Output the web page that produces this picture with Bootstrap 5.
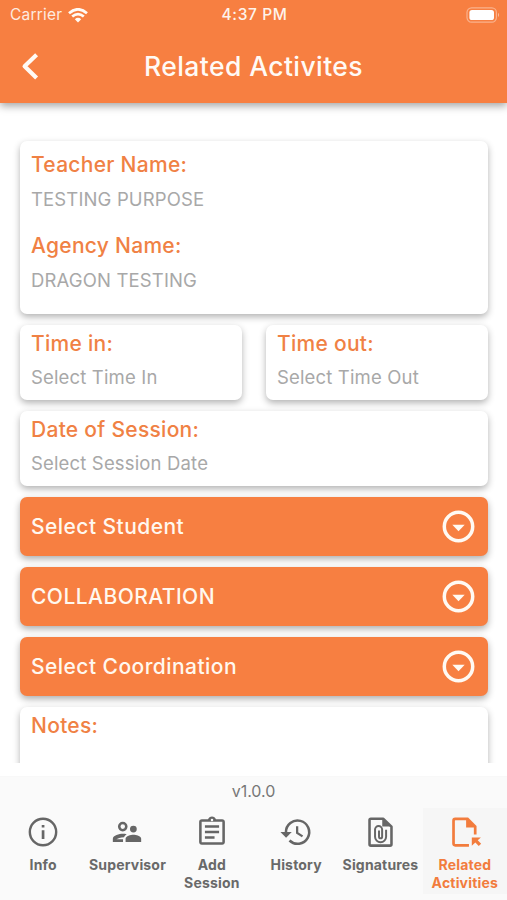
<!DOCTYPE html>
<html lang="en">
<head>
<meta charset="utf-8">
<meta name="viewport" content="width=device-width, initial-scale=1">
<title>Related Activites</title>
<link href="https://cdn.jsdelivr.net/npm/bootstrap@5.3.0/dist/css/bootstrap.min.css" rel="stylesheet">
<style>
:root{--brand:#f77f41}
body{font-family:Inter,"Liberation Sans",sans-serif;background:#fff}
.app{height:900px;overflow:hidden}
.top{height:103px;background:var(--brand);color:#fffaf5;box-shadow:0 3px 8px rgba(0,0,0,.36);z-index:2}
.status{height:30px;padding:0 8px 0 10px}
.status>div{flex:1 1 0}
.carrier{font-size:15.5px;letter-spacing:.2px;opacity:.88}
.wifi{margin-left:6px}
.clock{font-size:15.5px;font-weight:500;letter-spacing:.6px;opacity:.95}
.titlebar{height:73px;padding-left:21px}
.titlebar h1{font-size:26.5px;font-weight:500;letter-spacing:.42px;line-height:40px;margin:-2px -5px 0 0}
.side{width:20px}
.content{height:660px;padding:38px 19px 0 20px;overflow:hidden}
.panel{background:#fff;border-radius:7px;box-shadow:0 3px 7px rgba(0,0,0,.3);padding:5px 11px 0}
.panel.tall{height:173px;padding-top:10px}
.panel.mid{height:75px}
.panel.notes{height:120px}
.stack{gap:11px}
.lbl{font-size:21px;font-weight:500;color:#f08144;line-height:28px;letter-spacing:.28px;white-space:nowrap}
.val{font-size:18.5px;font-weight:400;color:#a8a8a8;line-height:26px;margin-top:7px;letter-spacing:.16px;white-space:nowrap}
.panel.mid .val{margin-top:6px}
.val.caps{letter-spacing:.14px}
.gap-field{margin-top:20px}
.pick{height:59px;border-radius:7px;border:0;background:var(--brand);color:#fff8ef;font-size:21px;font-weight:500;letter-spacing:.45px;padding:0 13px 0 11px;box-shadow:0 3px 7px rgba(0,0,0,.32)}
.foot{height:124px;background:#fafafa;color:#666;border-top:1px solid #f8f8f8}
.ver{font-size:16px;line-height:20px;padding-top:4px;letter-spacing:0;color:#777}
.tabs{margin:7px 0 0 1px}
.tab{flex:1 1 0;height:86px;padding-top:7px;font-size:14px;line-height:17.5px;font-weight:700;letter-spacing:.18px;color:#696969;text-decoration:none;white-space:nowrap}
.tab svg{display:block;margin-bottom:7px}
.tab.on{background:#f6f6f6;color:#f27c3d}
</style>
<script src="https://cdn.jsdelivr.net/npm/bootstrap@5.3.0/dist/js/bootstrap.bundle.min.js"></script>
</head>
<body>
<div class="app d-flex flex-column">
  <header class="top position-relative flex-shrink-0">
    <div class="status d-flex align-items-center">
      <div class="d-flex align-items-center"><span class="carrier">Carrier</span>
        <svg class="wifi" width="20" height="15" viewBox="0 0 20 15" fill="none" stroke="#fffaf5" stroke-width="2.7"><path d="M1 5.2Q10-2.6 19 5.2M4.2 8.6Q10 3.6 15.8 8.6"/><path d="M6.8 11.2Q10 8.4 13.2 11.2L10 14.6Z" fill="#fffaf5" stroke="none"/></svg>
      </div>
      <span class="clock">4:37 PM</span>
      <div class="d-flex justify-content-end">
        <svg width="33" height="16" viewBox="0 0 33 16"><rect x="1" y=".8" width="29.4" height="14.4" rx="4.6" fill="none" stroke="#fff" stroke-opacity=".4" stroke-width="1.2"/><rect x="3.4" y="3" width="24.6" height="10" rx="2.6" fill="#fff"/><path d="M32 5.8q2 2.2 0 4.4z" fill="#fff" fill-opacity=".5"/></svg>
      </div>
    </div>
    <div class="titlebar d-flex align-items-center justify-content-between pe-4">
      <svg width="18" height="28" viewBox="0 0 18 28" fill="none" stroke="#fffaf5" stroke-width="4.2"><path d="M15.6 1.8 3.6 13.2 15.6 25" stroke-linejoin="round"/></svg>
      <h1>Related Activites</h1>
      <span class="side"></span>
    </div>
  </header>

  <main class="content flex-shrink-0">
    <div class="stack d-flex flex-column">
      <section class="panel tall">
        <div class="lbl">Teacher Name:</div><div class="val caps">TESTING PURPOSE</div>
        <div class="lbl gap-field">Agency Name:</div><div class="val caps">DRAGON TESTING</div>
      </section>
      <div class="d-flex gap-4">
        <section class="panel mid flex-fill w-50"><div class="lbl">Time in:</div><div class="val">Select Time In</div></section>
        <section class="panel mid flex-fill w-50"><div class="lbl">Time out:</div><div class="val">Select Time Out</div></section>
      </div>
      <section class="panel mid"><div class="lbl">Date of Session:</div><div class="val">Select Session Date</div></section>
      <button class="pick d-flex align-items-center justify-content-between"><span>Select Student</span>
        <svg width="33" height="33" viewBox="0 0 33 33"><circle cx="16.5" cy="16.5" r="14.2" fill="none" stroke="#fffaf3" stroke-width="3.5"/><path d="M10.3 14.8h12.4l-6.2 6.4z" fill="#fffaf3"/></svg></button>
      <button class="pick d-flex align-items-center justify-content-between"><span>COLLABORATION</span>
        <svg width="33" height="33" viewBox="0 0 33 33"><circle cx="16.5" cy="16.5" r="14.2" fill="none" stroke="#fffaf3" stroke-width="3.5"/><path d="M10.3 14.8h12.4l-6.2 6.4z" fill="#fffaf3"/></svg></button>
      <button class="pick d-flex align-items-center justify-content-between"><span>Select Coordination</span>
        <svg width="33" height="33" viewBox="0 0 33 33"><circle cx="16.5" cy="16.5" r="14.2" fill="none" stroke="#fffaf3" stroke-width="3.5"/><path d="M10.3 14.8h12.4l-6.2 6.4z" fill="#fffaf3"/></svg></button>
      <section class="panel notes"><div class="lbl">Notes:</div></section>
    </div>
  </main>

  <footer class="foot mt-auto flex-shrink-0">
    <div class="ver text-center">v1.0.0</div>
    <nav class="tabs d-flex text-center">
      <a class="tab d-flex flex-column align-items-center" href="#"><svg width="34" height="34" viewBox="0 0 24 24"><circle cx="12" cy="12" r="9.3" fill="none" stroke="#666" stroke-width="1.7"/><path d="M11.1 7h1.9v1.9h-1.9zM11.1 10.8h1.9V17h-1.9z" fill="#666"/></svg>Info</a>
      <a class="tab d-flex flex-column align-items-center" href="#"><svg width="34" height="34" viewBox="0 0 24 24" fill="#666"><circle cx="9" cy="8.2" r="2.5" fill="none" stroke="#666" stroke-width="1.8"/><circle cx="16.5" cy="9.9" r="2.4"/><path d="M16.5 14c-1.83 0-5.5.92-5.5 2.75V19h11v-2.25C22 14.92 18.33 14 16.5 14z"/><path d="M9 13.2c-2.33 0-7 1.17-7 3.5V19h7.2v-1.8H4.5c.84-.7 2.9-1.5 5.4-1.5.3-.8.9-1.6 1.9-2.2-.9-.2-2-.3-2.8-.3z"/></svg>Supervisor</a>
      <a class="tab d-flex flex-column align-items-center" href="#"><svg width="34" height="34" viewBox="0 0 24 24" fill="#666"><path d="M7 15h6.8v1.8H7zm0-3.9h10v1.8H7zM7 7.2h10V9H7z"/><path fill-rule="evenodd" d="M19.2 3h-4.38C14.4 1.84 13.3 1 12 1S9.6 1.84 9.18 3H4.8C3.7 3 2.9 3.8 2.9 4.9v14.2c0 1.1.8 1.9 1.9 1.9h14.4c1.1 0 1.9-.8 1.9-1.9V4.9c0-1.1-.8-1.9-1.9-1.9zM12 2.6a.9.9 0 1 1 0 1.8.9.9 0 0 1 0-1.8zm7.3 16.6H4.7V4.8h14.6z"/></svg>Add<br>Session</a>
      <a class="tab d-flex flex-column align-items-center" href="#"><svg width="34" height="34" viewBox="0 0 24 24"><path d="M4.9 12.2A8.2 8.2 0 1 1 7.4 18" fill="none" stroke="#666" stroke-width="1.8"/><path d="M1 12h8l-4 4z" fill="#666"/><path d="M12.8 8v4.6l3.8 2.5" fill="none" stroke="#666" stroke-width="1.6"/></svg>History</a>
      <a class="tab d-flex flex-column align-items-center" href="#"><svg width="34" height="34" viewBox="0 0 24 24" fill="none" stroke="#666" stroke-width="1.8"><path d="M14.2 2.6H5.6a1 1 0 0 0-1 1v17a1 1 0 0 0 1 1h13.5a1 1 0 0 0 1-1V8.2z" stroke-linejoin="round"/><path d="M13.6 2.4v5.8h6.2z" fill="#666" stroke="none"/><path d="M16.3 10.4v4.9a3.9 3.9 0 0 1-7.8 0v-5a2.5 2.5 0 0 1 5 0v5a1.1 1.1 0 0 1-2.2 0v-4.4" stroke-width="1.4"/></svg>Signatures</a>
      <a class="tab on d-flex flex-column align-items-center" href="#"><svg width="34" height="34" viewBox="0 0 24 24" fill="none" stroke="#f27c3d" stroke-width="1.9"><path d="M14.8 21.4H5.1a1.2 1.2 0 0 1-1.2-1.2V4a1.2 1.2 0 0 1 1.2-1.2h8.7l5.4 5.4v5.6"/><path d="M12.8 2.6v6.2h6.6z" fill="#f27c3d" stroke="none"/><path d="M16.8 15.8h6.4l-2.2 2 2.4 2.5-1.7 1.6-2.4-2.5-2.5 2.3z" fill="#f27c3d" stroke="none"/></svg>Related<br>Activities</a>
    </nav>
  </footer>
</div>
</body>
</html>
